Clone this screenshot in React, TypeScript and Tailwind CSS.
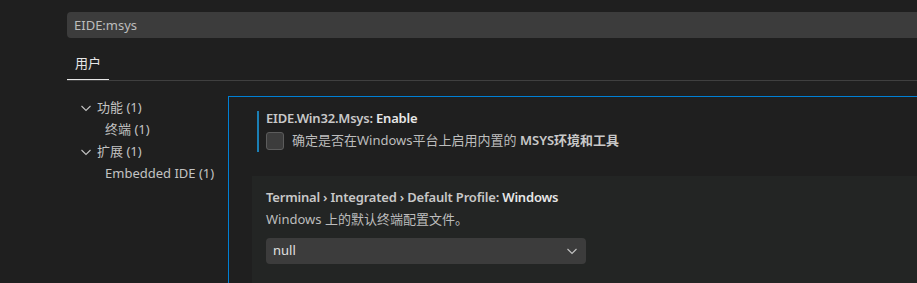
import React from "react";

const font = "font-['Noto_Sans','Noto_Sans_CJK_SC',sans-serif]";

function Chevron({ className = "" }: { className?: string }) {
  return (
    <svg width="16" height="16" viewBox="0 0 16 16" className={className} fill="none">
      <path d="M3.5 6 L8 10.5 L12.5 6" stroke="currentColor" strokeWidth="1.1" />
    </svg>
  );
}

const tree = [
  { label: "功能 (1)", level: 0 },
  { label: "终端 (1)", level: 1 },
  { label: "扩展 (1)", level: 0 },
  { label: "Embedded IDE (1)", level: 1 },
];

export default function App() {
  return (
    <div className={`h-[283px] w-[917px] overflow-hidden bg-[#1f1f1f] text-[13px] text-[#cccccc] ${font}`}>
      <div className="pl-[67px] pt-3">
        {/* 搜索框 */}
        <div className="flex h-[26px] items-center rounded-l-sm bg-[#3c3c3c] pl-[7px] pt-px text-[#bdbdbd]">EIDE:msys</div>

        {/* 标签 */}
        <div className="flex border-b border-[#3f3f3f]">
          <div className="flex h-[42px] w-[42px] items-center justify-center border-b border-[#e7e7e7] pt-[10px] text-[#e7e7e7]">
            用户
          </div>
        </div>
      </div>

      <div className="flex">
        {/* 左侧目录 */}
        <div className="w-[228px] shrink-0 pl-[67px] pt-[16px]">
          {tree.map((t) => (
            <div key={t.label} className="flex h-[22px] items-center text-[#c3c3c3]">
              {t.level === 0 ? (
                <Chevron className="ml-[11px] mr-[3px] shrink-0 text-[#c3c3c3]" />
              ) : (
                <span className="w-[38px] shrink-0" />
              )}
              <span className="whitespace-nowrap">{t.label}</span>
            </div>
          ))}
        </div>

        {/* 设置列表 */}
        <div className="mt-[15px] h-[300px] flex-1 border-l border-t border-[#007fd4] pl-[28px] pt-[14px]">
          <div className="h-[41px] border-l-2 border-[#1b7fb5] pl-[7px]">
            <div className="h-[14px] leading-[14px] font-semibold tracking-[-0.2px] text-[#c8c8c8]">
              EIDE.Win32.Msys: <span className="text-[#e7e7e7]">Enable</span>
            </div>
            <div className="mt-[6px] flex items-center">
              <div className="h-[18px] w-[18px] rounded-[3px] border border-[#5c5c5c] bg-[#3c3c3c]" />
              <span className="ml-[8px] text-[#bdbdbd]">
                确定是否在Windows平台上启用内置的 <b className="font-semibold text-[#c8c8c8]">MSYS环境和工具</b>
              </span>
            </div>
          </div>

          <div className="-ml-[5px] mt-[24px] h-[120px] bg-[#232524] pl-[14px] pt-[12px]">
            <div className="h-[18px] leading-[18px] font-semibold tracking-[-0.2px] text-[#c8c8c8]">
              Terminal › Integrated › Default Profile: <span className="text-[#e7e7e7]">Windows</span>
            </div>
            <div className="mt-[4px] h-[18px] leading-[18px] text-[#bdbdbd]">Windows 上的默认终端配置文件。</div>
            <div className="mt-[10px] flex h-[26px] w-[320px] items-center justify-between rounded-sm bg-[#3c3c3c] pl-[7px] pr-[6px] text-[#e0e0e0]">
              <span>null</span>
              <Chevron className="text-[#c3c3c3]" />
            </div>
          </div>
        </div>
      </div>
    </div>
  );
}
